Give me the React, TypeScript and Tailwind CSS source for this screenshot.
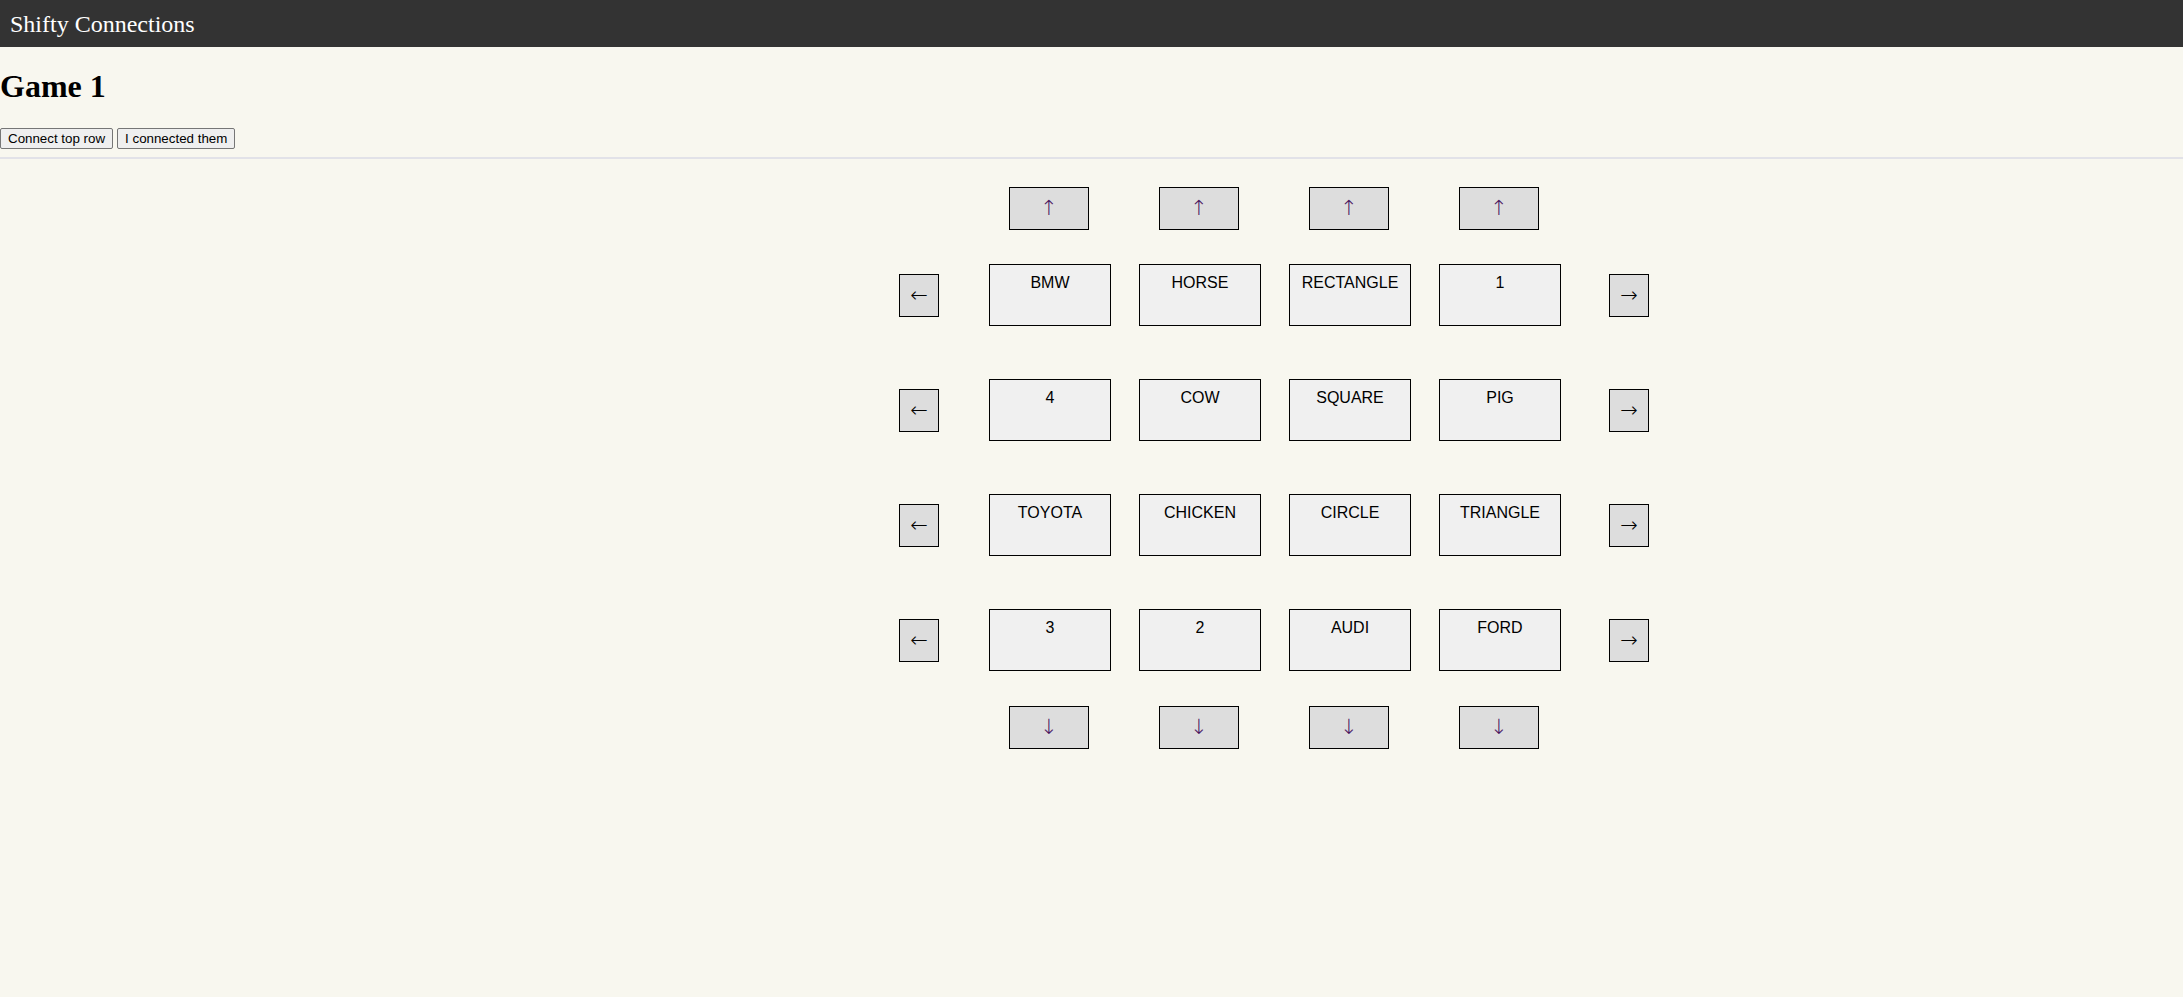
import React, { useState } from 'react';

const initialGrid: string[][] = [
    ['BMW', 'HORSE', 'RECTANGLE', '1'],
    ['4', 'COW', 'SQUARE', 'PIG'],
    ['TOYOTA', 'CHICKEN', 'CIRCLE', 'TRIANGLE'],
    ['3', '2', 'AUDI', 'FORD'],
];

const shiftRow = (grid: string[][], r: number, dir: 1 | -1) =>
    grid.map((row, i) => {
        if (i !== r) return row;
        return dir === 1 ? [row[3], ...row.slice(0, 3)] : [...row.slice(1), row[0]];
    });

const shiftCol = (grid: string[][], c: number, dir: 1 | -1) => {
    const col = grid.map(row => row[c]);
    const moved = dir === 1 ? [col[3], ...col.slice(0, 3)] : [...col.slice(1), col[0]];
    return grid.map((row, i) => row.map((cell, j) => (j === c ? moved[i] : cell)));
};

const App: React.FC = () => {
    const [grid, setGrid] = useState(initialGrid);

    const vArrow =
        'w-[80px] h-[43px] flex items-center justify-center bg-[#dddddd] border border-black text-[21px] leading-none text-[#4a1660] font-["DejaVu_Sans",sans-serif] font-extralight';
    const hArrow =
        'w-[40px] h-[43px] flex items-center justify-center bg-[#dddddd] border border-black text-[21px] leading-none text-black font-["DejaVu_Sans",sans-serif] font-extralight';

    return (
        <div className="min-h-screen bg-[#f8f7ef] font-['Liberation_Serif','Times_New_Roman',serif] text-black">
            <header className="h-[47px] bg-[#333333] px-[10px] pt-[2px] flex items-center">
                <span className="text-[24px] text-white leading-[27px]">Shifty Connections</span>
            </header>

            <h1 className="mt-[21px] text-[32px] leading-[37px] font-bold">Game 1</h1>

            <div className="mt-[23px] pb-[8px] border-b-2 border-[#e2e2e8] flex gap-[4px] font-['Liberation_Sans',Arial,sans-serif]">
                <button className="h-[21px] px-[7px] text-[13.33px] bg-[#efefef] border border-[#767676] rounded-[2px]">
                    Connect top row
                </button>
                <button className="h-[21px] px-[7px] text-[13.33px] bg-[#efefef] border border-[#767676] rounded-[2px]">
                    I connected them
                </button>
            </div>

            <div className="pl-[899px] pt-[28px] flex flex-col font-['Liberation_Sans',Arial,sans-serif]">
                <div className="flex gap-[70px] pl-[110px]">
                    {[0, 1, 2, 3].map(c => (
                        <button key={c} className={vArrow} onClick={() => setGrid(g => shiftCol(g, c, -1))}>
                            ↑
                        </button>
                    ))}
                </div>

                <div className="mt-[34px] flex flex-col gap-[53px]">
                    {grid.map((row, r) => (
                        <div key={r} className="flex items-center">
                            <button className={hArrow} onClick={() => setGrid(g => shiftRow(g, r, -1))}>
                                ←
                            </button>
                            <div className="ml-[50px] flex gap-[28px]">
                                {row.map((word, c) => (
                                    <div
                                        key={c}
                                        className="w-[122px] h-[62px] bg-[#f0f0f0] border border-black pt-[9px] text-center text-[16px] leading-[18px]"
                                    >
                                        {word}
                                    </div>
                                ))}
                            </div>
                            <button className={`${hArrow} ml-[48px]`} onClick={() => setGrid(g => shiftRow(g, r, 1))}>
                                →
                            </button>
                        </div>
                    ))}
                </div>

                <div className="mt-[35px] flex gap-[70px] pl-[110px]">
                    {[0, 1, 2, 3].map(c => (
                        <button key={c} className={vArrow} onClick={() => setGrid(g => shiftCol(g, c, 1))}>
                            ↓
                        </button>
                    ))}
                </div>
            </div>
        </div>
    );
};

export default App;
